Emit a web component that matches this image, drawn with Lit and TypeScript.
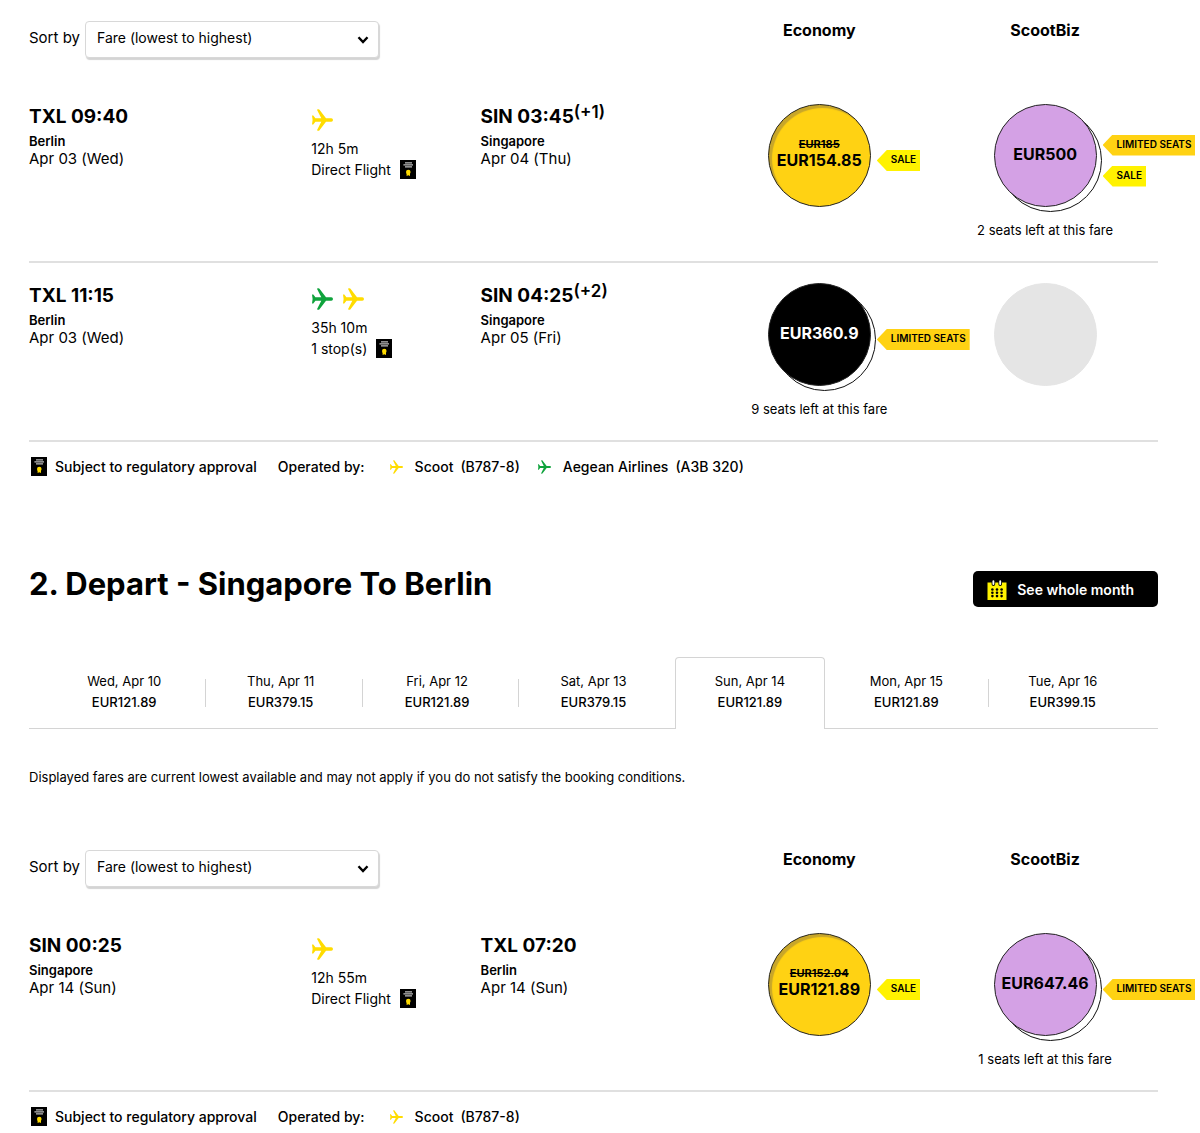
import { LitElement, html, css, svg, nothing } from "lit";
import { customElement, property, state } from "lit/decorators.js";
import { classMap } from "lit/directives/class-map.js";

interface Stop {
  code: string;
  time: string;
  city: string;
  date: string;
  plus?: string;
}

interface Fare {
  price?: string;
  was?: string;
  kind: "selected" | "economy" | "biz" | "empty";
  tags?: string[];
  left?: number;
}

interface Flight {
  from: Stop;
  to: Stop;
  carriers: string[];
  duration: string;
  stops: string;
  economy: Fare;
  biz: Fare;
}

interface Operator {
  carrier: string;
  name: string;
  aircraft: string;
}

const OUTBOUND: Flight[] = [
  {
    from: { code: "TXL", time: "09:40", city: "Berlin", date: "Apr 03 (Wed)" },
    to: { code: "SIN", time: "03:45", city: "Singapore", date: "Apr 04 (Thu)", plus: "(+1)" },
    carriers: ["scoot"],
    duration: "12h 5m",
    stops: "Direct Flight",
    economy: { price: "EUR154.85", was: "EUR185", kind: "selected", tags: ["SALE"] },
    biz: { price: "EUR500", kind: "biz", tags: ["LIMITED SEATS", "SALE"], left: 2 },
  },
  {
    from: { code: "TXL", time: "11:15", city: "Berlin", date: "Apr 03 (Wed)" },
    to: { code: "SIN", time: "04:25", city: "Singapore", date: "Apr 05 (Fri)", plus: "(+2)" },
    carriers: ["aegean", "scoot"],
    duration: "35h 10m",
    stops: "1 stop(s)",
    economy: { price: "EUR360.9", kind: "economy", tags: ["LIMITED SEATS"], left: 9 },
    biz: { kind: "empty" },
  },
];

const INBOUND: Flight[] = [
  {
    from: { code: "SIN", time: "00:25", city: "Singapore", date: "Apr 14 (Sun)" },
    to: { code: "TXL", time: "07:20", city: "Berlin", date: "Apr 14 (Sun)" },
    carriers: ["scoot"],
    duration: "12h 55m",
    stops: "Direct Flight",
    economy: { price: "EUR121.89", was: "EUR152.04", kind: "selected", tags: ["SALE"] },
    biz: { price: "EUR647.46", kind: "biz", tags: ["LIMITED SEATS"], left: 1 },
  },
];

const SCOOT: Operator = { carrier: "scoot", name: "Scoot", aircraft: "(B787-8)" };
const AEGEAN: Operator = { carrier: "aegean", name: "Aegean Airlines", aircraft: "(A3B 320)" };

const DAYS = [
  ["Wed, Apr 10", "EUR121.89"],
  ["Thu, Apr 11", "EUR379.15"],
  ["Fri, Apr 12", "EUR121.89"],
  ["Sat, Apr 13", "EUR379.15"],
  ["Sun, Apr 14", "EUR121.89"],
  ["Mon, Apr 15", "EUR121.89"],
  ["Tue, Apr 16", "EUR399.15"],
];

const plane = (carrier: string) => html`<svg
  class=${`plane ${carrier}`}
  viewBox="0 0 21 22"
  aria-hidden="true"
>
  <path
    d="M0 6.6H1.3L3.4 9.3H9.3L5.1 1C5 .5 5.3 .2 5.8 .2H6.4C6.9 .2 7.2 .4 7.5 .8L14 9.3H19.3A1.7 1.7 0 0 1 19.3 12.7H14L7.5 21.2C7.2 21.6 6.9 21.8 6.4 21.8H5.8C5.3 21.8 5 21.5 5.1 21L9.3 12.7H3.4L1.3 15.4H0L.6 11Z"
  />
</svg>`;

const approval = html`<svg class="approval" viewBox="0 0 16 19" aria-hidden="true">
  <rect width="16" height="19" fill="#000" />
  <path d="M5 2.8H12M3.4 4.8H13M5 6.8H12" stroke="#bdbdbd" stroke-width="1.3" />
  <circle cx="8.3" cy="12" r="2.3" fill="#ffdc00" />
  <path d="M6.6 12.5H10V16L8.3 15.2L6.6 16Z" fill="#ffdc00" />
</svg>`;

const calendar = html`<svg class="calendar" viewBox="0 0 20 20" aria-hidden="true">
  <path d="M.5 2.5H19.5V20H.5Z" fill="#fff200" />
  <path d="M6.4 1.8V4.2M13.2 1.8V4.2" stroke="#000" stroke-width="3.6" stroke-linecap="round" />
  <path d="M6.4 1.2V4M13.2 1.2V4" stroke="#fff" stroke-width="1.9" stroke-linecap="round" />
  ${[9.5, 12.8, 16.1].map((y) =>
    [5.4, 10, 14.6].map((x) => svg`<circle cx=${x} cy=${y} r="1.3" fill="#000" />`)
  )}
</svg>`;

@customElement("flight-list")
export class FlightList extends LitElement {
  @property({ attribute: false }) flights: Flight[] = [];
  @property({ attribute: false }) operators: Operator[] = [];

  static styles = css`
    :host {
      display: block;
    }
    * {
      box-sizing: border-box;
    }
    .row {
      display: grid;
      grid-template-columns: 25fr 15fr 20fr 20fr 20fr;
    }
    .head {
      padding: 21px 0 26px;
    }
    .sort {
      grid-column: 1 / 4;
      display: flex;
      align-items: flex-start;
      gap: 5px;
      font-size: 15px;
      line-height: 34px;
    }
    .pick {
      display: grid;
      align-items: center;
      width: 294px;
    }
    .pick select,
    .pick svg {
      grid-area: 1 / 1;
    }
    .pick select {
      appearance: none;
      width: 100%;
      height: 37px;
      padding: 0 36px 4px 11px;
      font: 14px/20px "Inter", sans-serif;
      color: #000;
      background: #fff;
      border: 1px solid #d8d8d8;
      border-radius: 4px;
      box-shadow: 1px 2px 1px #d4d4d4;
    }
    .pick svg {
      justify-self: end;
      width: 12px;
      height: 8px;
      margin-right: 10px;
      pointer-events: none;
    }
    .cabin {
      margin: 0;
      text-align: center;
      font-size: 16px;
      font-weight: 700;
      line-height: 18px;
    }
    .list {
      margin: 0;
      padding: 0;
      list-style: none;
    }
    .flight {
      padding: 18px 0 20px;
      border-bottom: 2px solid #e0e0e0;
    }
    .when {
      margin: 0;
      font-size: 19px;
      font-weight: 700;
      line-height: 30px;
    }
    .when sup {
      font-size: 17px;
      font-weight: 600;
      line-height: 1px;
      vertical-align: 5px;
    }
    .city {
      margin: 0;
      font-size: 13px;
      font-weight: 600;
      line-height: 18px;
    }
    .date {
      margin: 0;
      font-size: 15px;
      line-height: 18px;
    }
    .via {
      padding-top: 7px;
      font-size: 14px;
      line-height: 21px;
    }
    .via p {
      margin: 0;
      display: flex;
      align-items: center;
      gap: 9px;
    }
    .planes {
      display: flex;
      gap: 10px;
      padding-left: 1px;
      margin-bottom: 7px;
    }
    .plane {
      width: 21px;
      height: 22px;
      flex: none;
    }
    .scoot {
      fill: #ffdc00;
    }
    .aegean {
      fill: #0fa33c;
    }
    .approval {
      width: 16px;
      height: 19px;
      flex: none;
    }
    .fare {
      padding-top: 2px;
      display: flex;
      flex-direction: column;
      align-items: center;
      gap: 13px;
    }
    .spot {
      position: relative;
      width: 103px;
      height: 103px;
    }
    .limited::before {
      content: "";
      position: absolute;
      inset: 5px -5px -5px 5px;
      border: 1px solid #111;
      border-radius: 50%;
    }
    .disc {
      position: relative;
      display: flex;
      flex-direction: column;
      align-items: center;
      justify-content: center;
      width: 100%;
      height: 100%;
      padding: 0 0 4px;
      border: 1px solid #222;
      border-radius: 50%;
      font: 700 16px/18px "Inter", sans-serif;
      color: #000;
      white-space: nowrap;
    }
    .disc s {
      font-size: 11px;
      line-height: 13px;
    }
    .disc.selected {
      background: #ffd213;
      box-shadow: inset 3px 3px 1px #c8a62a;
    }
    .disc.biz {
      background: #d4a1e5;
    }
    .disc.economy {
      background: #000;
      color: #fff;
    }
    .disc.empty {
      background: #e5e5e5;
      border-color: #e5e5e5;
    }
    .tags {
      position: absolute;
      left: 109px;
      top: 5px;
      height: 103px;
      display: flex;
      flex-direction: column;
      align-items: flex-start;
      justify-content: center;
      gap: 10px;
    }
    .tag {
      padding: 0 4px 2px 14px;
      font-size: 10px;
      font-weight: 600;
      line-height: 19px;
      white-space: nowrap;
      background: #fff200;
      clip-path: polygon(0 50%, 10px 0, 100% 0, 100% 100%, 10px 100%);
    }
    .tag.low {
      background: #ffd213;
    }
    .left {
      margin: 0;
      min-height: 21px;
      font-size: 13px;
      line-height: 21px;
      white-space: nowrap;
    }
    .legend {
      display: flex;
      align-items: center;
      padding: 14px 0 0;
      font-size: 14px;
      font-weight: 500;
      line-height: 21px;
    }
    .legend .approval {
      margin: 0 8px 0 2px;
    }
    .by {
      margin: 0 7px 0 21px;
    }
    .operator {
      display: flex;
      align-items: center;
      gap: 7px;
      margin-left: 18px;
    }
    .operator .plane {
      width: 13px;
      height: 14px;
      margin-right: 5px;
    }
  `;

  private stop(s: Stop) {
    return html`<div>
      <h3 class="when">${s.code} ${s.time}${s.plus ? html`<sup>${s.plus}</sup>` : nothing}</h3>
      <p class="city">${s.city}</p>
      <p class="date">${s.date}</p>
    </div>`;
  }

  private fare(f: Fare) {
    return html`<div class="fare">
      <div class=${classMap({ spot: true, limited: f.left !== undefined })}>
        <button class=${`disc ${f.kind}`} type="button" ?disabled=${f.kind === "empty"}>
          ${f.was ? html`<s>${f.was}</s>` : nothing}
          ${f.price ? html`<span>${f.price}</span>` : nothing}
        </button>
        ${f.tags
          ? html`<div class="tags">
              ${f.tags.map(
                (t) => html`<span class=${classMap({ tag: true, low: t !== "SALE" })}>${t}</span>`
              )}
            </div>`
          : nothing}
      </div>
      <p class="left">${f.left ? `${f.left} seats left at this fare` : nothing}</p>
    </div>`;
  }

  render() {
    return html`
      <div class="row head">
        <div class="sort">
          <label for="sort">Sort by</label>
          <div class="pick">
            <select id="sort">
              <option>Fare (lowest to highest)</option>
            </select>
            <svg viewBox="0 0 12 8" aria-hidden="true">
              <path d="M1.5 1.2L6 6L10.5 1.2" fill="none" stroke="#000" stroke-width="2.4" />
            </svg>
          </div>
        </div>
        <h3 class="cabin">Economy</h3>
        <h3 class="cabin">ScootBiz</h3>
      </div>
      <ul class="list">
        ${this.flights.map(
          (f) => html`<li class="row flight">
            ${this.stop(f.from)}
            <div class="via">
              <div class="planes">${f.carriers.map(plane)}</div>
              <p>${f.duration}</p>
              <p>${f.stops} ${approval}</p>
            </div>
            ${this.stop(f.to)} ${this.fare(f.economy)} ${this.fare(f.biz)}
          </li>`
        )}
      </ul>
      <div class="legend">
        ${approval}<span>Subject to regulatory approval</span>
        <span class="by">Operated by:</span>
        ${this.operators.map(
          (o) => html`<span class="operator"
            >${plane(o.carrier)}<span>${o.name}</span><span>${o.aircraft}</span></span
          >`
        )}
      </div>
    `;
  }
}

@customElement("app-root")
export class AppRoot extends LitElement {
  @state() private day = 4;

  static styles = css`
    :host {
      display: block;
      padding: 0 42px 0 29px;
      background: #fff;
      color: #000;
      font-family: "Inter", sans-serif;
    }
    * {
      box-sizing: border-box;
    }
    .bar {
      display: flex;
      justify-content: space-between;
      align-items: flex-start;
      margin-top: 94px;
    }
    .title {
      margin: 0;
      font-size: 31px;
      font-weight: 700;
      line-height: 26px;
    }
    .month {
      display: flex;
      align-items: center;
      gap: 10px;
      height: 36px;
      padding: 2px 24px 0 14px;
      border: 0;
      border-radius: 5px;
      background: #000;
      color: #fff;
      font: 600 14px/20px "Inter", sans-serif;
    }
    .calendar {
      width: 20px;
      height: 20px;
    }
    .days {
      display: flex;
      gap: 6px;
      margin-top: 50px;
      padding: 0 20px;
      box-shadow: inset 0 -1px #d4d4d4;
    }
    .day {
      position: relative;
      flex: 1 1 0;
      height: 72px;
      padding: 0 0 4px;
      border: 1px solid transparent;
      border-bottom: 0;
      border-radius: 4px 4px 0 0;
      background: none;
      color: #000;
      font: 13px/21px "Inter", sans-serif;
    }
    .day b {
      display: block;
      font-weight: 500;
    }
    .day.active {
      border-color: #d4d4d4;
      background: #fff;
    }
    .day.split::after {
      content: "";
      position: absolute;
      right: -8px;
      top: 21px;
      width: 1px;
      height: 28px;
      background: #d4d4d4;
    }
    .note {
      margin: 38px 0 42px;
      font-size: 13px;
      line-height: 20px;
    }
  `;

  render() {
    return html`
      <flight-list .flights=${OUTBOUND} .operators=${[SCOOT, AEGEAN]}></flight-list>
      <div class="bar">
        <h2 class="title">2. Depart - Singapore To Berlin</h2>
        <button class="month" type="button">${calendar}See whole month</button>
      </div>
      <div class="days">
        ${DAYS.map(
          ([label, price], i) => html`<button
            type="button"
            class=${classMap({
              day: true,
              active: i === this.day,
              split: i !== this.day && i + 1 !== this.day && i < DAYS.length - 1,
            })}
            @click=${() => (this.day = i)}
          >
            ${label}<b>${price}</b>
          </button>`
        )}
      </div>
      <p class="note">
        Displayed fares are current lowest available and may not apply if you do not satisfy the
        booking conditions.
      </p>
      <flight-list .flights=${INBOUND} .operators=${[SCOOT]}></flight-list>
    `;
  }
}
